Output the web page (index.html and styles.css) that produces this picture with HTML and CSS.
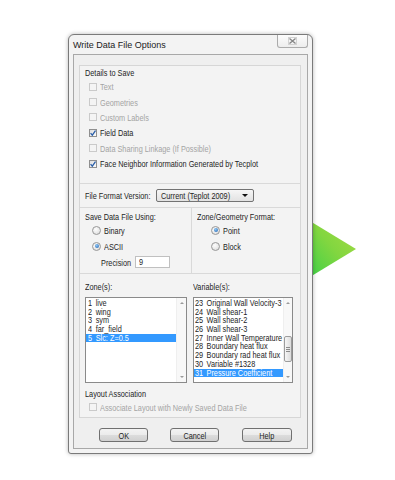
FILE: index.html
```html
<!DOCTYPE html>
<html>
<head>
<meta charset="utf-8">
<link rel="stylesheet" href="styles.css">
</head>
<body>
<svg class="deco" width="70" height="74" viewBox="0 0 70 74">
  <defs>
    <linearGradient id="g" x1="0" y1="1" x2="1" y2="0">
      <stop offset="0" stop-color="#2ccf4a"/>
      <stop offset="0.55" stop-color="#82d640"/>
      <stop offset="1" stop-color="#acdc44"/>
    </linearGradient>
  </defs>
  <polygon points="10,3 66,37 10,71" fill="url(#g)"/>
</svg>
<div class="dialog">
  <div class="titlebar">
    <span class="title">Write Data File Options</span>
    <span class="close"><svg width="9" height="8" viewBox="0 0 9 8"><rect x="0.5" y="0.5" width="8" height="7" fill="none" stroke="#d2d2d2" stroke-width="1"/><path d="M1.5 1.5 L7.5 6.5 M7.5 1.5 L1.5 6.5" stroke="#858585" stroke-width="1.3" fill="none"/></svg></span>
  </div>
  <div class="client">
    <div class="panel">
      <section class="sec details">
        <div class="heading"><span class="t">Details to Save</span></div>
        <div class="cb disabled"><span class="box"></span><span class="t">Text</span></div>
        <div class="cb disabled"><span class="box"></span><span class="t">Geometries</span></div>
        <div class="cb disabled"><span class="box"></span><span class="t">Custom Labels</span></div>
        <div class="cb"><span class="box checked"><svg width="6" height="6" viewBox="0 0 6 6"><path d="M0.6 3.2 L2.3 5.2 L5.5 0.5" stroke="#2a5ea8" stroke-width="1.3" fill="none"/></svg></span><span class="t">Field Data</span></div>
        <div class="cb disabled"><span class="box"></span><span class="t">Data Sharing Linkage (If Possible)</span></div>
        <div class="cb"><span class="box checked"><svg width="6" height="6" viewBox="0 0 6 6"><path d="M0.6 3.2 L2.3 5.2 L5.5 0.5" stroke="#2a5ea8" stroke-width="1.3" fill="none"/></svg></span><span class="t">Face Neighbor Information Generated by Tecplot</span></div>
      </section>
      <section class="sec format">
        <span class="format-label"><span class="t">File Format Version:</span></span>
        <div class="select"><span class="t">Current (Teplot 2009)</span><span class="caret"></span></div>
      </section>
      <section class="sec split">
        <div class="col left">
          <div class="heading"><span class="t">Save Data File Using:</span></div>
          <div class="rb"><span class="radio"></span><span class="t">Binary</span></div>
          <div class="rb"><span class="radio on"></span><span class="t">ASCII</span></div>
          <div class="prec"><span class="prec-label"><span class="t">Precision</span></span><span class="input"><span class="t">9</span></span></div>
        </div>
        <div class="col right">
          <div class="heading"><span class="t">Zone/Geometry Format:</span></div>
          <div class="rb"><span class="radio on"></span><span class="t">Point</span></div>
          <div class="rb"><span class="radio"></span><span class="t">Block</span></div>
        </div>
      </section>
      <section class="sec lists">
        <div class="list-grid">
          <div class="heading"><span class="t">Zone(s):</span></div>
          <div class="heading"><span class="t">Variable(s):</span></div>
          <div class="listbox zone">
            <div class="items">
              <div class="row"><span class="t"><span class="n">1</span>live</span></div>
              <div class="row"><span class="t"><span class="n">2</span>wing</span></div>
              <div class="row"><span class="t"><span class="n">3</span>sym</span></div>
              <div class="row"><span class="t"><span class="n">4</span>far_field</span></div>
              <div class="row sel"><span class="t"><span class="n">5</span>Slc: Z=0.5</span></div>
            </div>
            <div class="sbar">
              <span class="sbtn up"></span>
              <span class="track"></span>
              <span class="sbtn down"></span>
            </div>
          </div>
          <div class="listbox var">
            <div class="items">
              <div class="row"><span class="t"><span class="n">23</span>Original Wall Velocity-3</span></div>
              <div class="row"><span class="t"><span class="n">24</span>Wall shear-1</span></div>
              <div class="row"><span class="t"><span class="n">25</span>Wall shear-2</span></div>
              <div class="row"><span class="t"><span class="n">26</span>Wall shear-3</span></div>
              <div class="row"><span class="t"><span class="n">27</span>Inner Wall Temperature</span></div>
              <div class="row"><span class="t"><span class="n">28</span>Boundary heat flux</span></div>
              <div class="row"><span class="t"><span class="n">29</span>Boundary rad heat flux</span></div>
              <div class="row"><span class="t"><span class="n">30</span>Variable #1328</span></div>
              <div class="row sel"><span class="t"><span class="n">31</span>Pressure Coefficient</span></div>
            </div>
            <div class="sbar">
              <span class="sbtn up"></span>
              <span class="track"><span class="thumb"><i></i><i></i><i></i></span></span>
              <span class="sbtn down"></span>
            </div>
          </div>
        </div>
        <div class="heading layout"><span class="t">Layout Association</span></div>
        <div class="cb disabled"><span class="box"></span><span class="t">Associate Layout with Newly Saved Data File</span></div>
      </section>
    </div>
    <div class="buttons">
      <span class="btn"><span class="t">OK</span></span>
      <span class="btn"><span class="t">Cancel</span></span>
      <span class="btn help"><span class="t">Help</span></span>
    </div>
  </div>
</div>
</body>
</html>
```
FILE: styles.css
```css
* { box-sizing: border-box; }
html, body { margin: 0; padding: 0; background: #fff; }
body {
  width: 395px; height: 480px; overflow: hidden; position: relative;
  font-family: "Liberation Sans", Arial, sans-serif;
  font-size: 9.5px; color: #1e1e1e;
}
.t {
  display: inline-block; white-space: nowrap;
  transform: scaleX(0.77); transform-origin: 0 50%;
}
.deco { position: absolute; left: 290px; top: 212px; z-index: 0; }

.dialog {
  position: relative; z-index: 1;
  margin: 34px 0 0 68px; width: 245px; height: 420px;
  border: 1px solid #7a7a7a; border-radius: 6px 6px 3px 3px;
  background: #f3f3f3;
  box-shadow: 0 0 4px rgba(0,0,0,0.28);
  display: flex; flex-direction: column;
  padding: 0 4px 4px 4px;
}
.titlebar {
  height: 19px; display: flex; justify-content: space-between; align-items: flex-start;
}
.title {
  font-size: 9px; color: #222; line-height: 20px;
}
.close {
  width: 31px; height: 13px; border: 1px solid #ababab; border-top: none;
  border-radius: 0 0 3px 3px;
  background: linear-gradient(#fcfcfc, #ededed);
  display: flex; align-items: center; justify-content: center;
}
.client {
  flex: 1; border: 1px solid #a8a8a8; background: #efefef;
  padding: 10px 6px 0 5px; display: flex; flex-direction: column;
}
.panel {
  border: 1px solid #d6d6d6; background: #f3f3f3;
  height: 353px; display: flex; flex-direction: column;
}
.sec { padding-left: 5px; }
.sec + .sec { border-top: 1px solid #d9d9d9; }
.heading { height: 12px; line-height: 12px; white-space: nowrap; }

.details { height: 117px; }
.details .heading { height: 13px; line-height: 13px; }
.details .cb { height: 15.4px; }

.cb { display: flex; align-items: center; padding-left: 4px; white-space: nowrap; }
.cb.disabled { color: #a4a4a4; }
.box {
  width: 8px; height: 8px; margin-right: 3px; flex: none;
  border: 1px solid #8f8f8f; background: linear-gradient(135deg, #dedede, #fbfbfb);
  display: flex; align-items: center; justify-content: center;
}
.cb.disabled .box { border-color: #cacaca; background: #f4f4f4; }

.format { height: 24px; display: flex; align-items: center; }
.format-label { width: 71px; white-space: nowrap; }
.select {
  width: 98px; height: 13px; border: 1px solid #737373; border-radius: 2px;
  background: linear-gradient(#f6f6f6, #e2e2e2);
  display: flex; align-items: center; justify-content: space-between;
  padding: 0 5px 0 4px;
}
.select .t { width: 70px; }
.caret {
  width: 0; height: 0; border-left: 3px solid transparent; border-right: 3px solid transparent;
  border-top: 3px solid #111;
}

.split { height: 66px; display: grid; grid-template-columns: 107px 1fr; padding-left: 5px; }
.col { padding-top: 3px; }
.col.left { border-right: 1px solid #d9d9d9; }
.col .heading { height: 11px; line-height: 11px; }
.col.right { padding-left: 5px; }
.rb { height: 16px; display: flex; align-items: center; white-space: nowrap; }
.left .rb { padding-left: 7px; }
.right .rb { padding-left: 14px; }
.radio {
  width: 9px; height: 9px; border-radius: 50%; border: 1px solid #979797; flex: none;
  background: radial-gradient(circle at 40% 35%, #fdfdfd, #d9d9d9);
  margin-right: 3px; display: flex; align-items: center; justify-content: center;
}
.radio.on::after {
  content: ""; width: 4px; height: 4px; border-radius: 50%;
  background: radial-gradient(circle at 40% 35%, #8dc6f5, #1b5fae);
}
.prec { height: 16px; display: flex; align-items: center; padding-left: 16px; }
.prec-label { width: 34px; }
.input {
  width: 35px; height: 12px; background: #fff; border: 1px solid #c0c0c0;
  padding-left: 3px; line-height: 10px;
}

.lists { height: 144px; padding-top: 7px; }
.list-grid { display: grid; grid-template-columns: 102px 100px; column-gap: 6px; row-gap: 4px; }
.listbox {
  height: 86px; border: 1px solid #8a8a8a; background: #fff; display: flex; min-width: 0;
}
.items { flex: 1; min-width: 0; overflow: hidden; padding-top: 1px; }
.row { height: 8.7px; line-height: 8.7px; padding-left: 2px; white-space: nowrap; }
.var .row { padding-left: 1px; }
.row.sel { background: #3399ff; color: #fff; }
.zone .n { display: inline-block; width: 10px; }
.var .n { display: inline-block; width: 15px; }
.sbar { width: 10px; flex: none; display: flex; flex-direction: column; background: #f8f8f8; border-left: 1px solid #efefef; }
.var .sbar { width: 9px; }
.sbtn { height: 10px; display: flex; align-items: center; justify-content: center; }
.sbtn::after { content: ""; width: 0; height: 0; border-left: 2px solid transparent; border-right: 2px solid transparent; }
.sbtn.up::after { border-bottom: 2px solid #9a9a9a; }
.sbtn.down::after { border-top: 2px solid #9a9a9a; }
.track { flex: 1; display: flex; flex-direction: column; }
.thumb {
  margin-top: 28px; height: 26px; width: 8px;
  border: 1px solid #9c9c9c; border-radius: 2px; background: linear-gradient(90deg, #f6f6f6, #dcdcdc);
  display: flex; flex-direction: column; align-items: center; justify-content: center; gap: 1px;
}
.thumb i { display: block; width: 4px; height: 1px; background: #8a8a8a; }
.heading.layout { margin-top: 5px; height: 12px; }
.lists .cb { height: 14px; }

.buttons { display: flex; gap: 22px; padding-left: 20px; margin-top: 10px; }
.btn {
  width: 49px; height: 14px; border: 1px solid #707070; border-radius: 3px;
  background: linear-gradient(#f3f3f3 0%, #ebebeb 48%, #dcdcdc 52%, #d0d0d0 100%);
  display: flex; align-items: center; justify-content: center;
}
.btn .t { transform-origin: 50% 50%; }
.btn.help { width: 50px; margin-left: 1px; }
```
